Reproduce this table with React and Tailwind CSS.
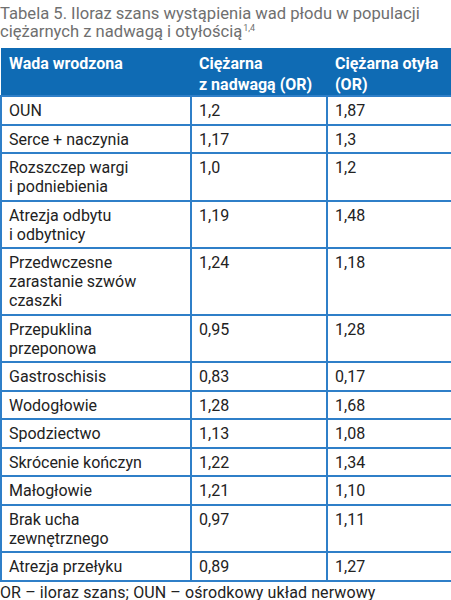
const rows = [
  ['OUN', '1,2', '1,87'],
  ['Serce + naczynia', '1,17', '1,3'],
  ['Rozszczep wargi\ni podniebienia', '1,0', '1,2'],
  ['Atrezja odbytu\ni odbytnicy', '1,19', '1,48'],
  ['Przedwczesne\nzarastanie szwów\nczaszki', '1,24', '1,18'],
  ['Przepuklina\nprzeponowa', '0,95', '1,28'],
  ['Gastroschisis', '0,83', '0,17'],
  ['Wodogłowie', '1,28', '1,68'],
  ['Spodziectwo', '1,13', '1,08'],
  ['Skrócenie kończyn', '1,22', '1,34'],
  ['Małogłowie', '1,21', '1,10'],
  ['Brak ucha\nzewnętrznego', '0,97', '1,11'],
  ['Atrezja przełyku', '0,89', '1,27'],
];

const App = () => {
  return (
    <div className="w-[451px] bg-white font-['Roboto',sans-serif]">
      {/* Tytuł */}
      <p className="text-[16.6px] leading-[18px] text-[#6f6f6f] pt-[5px] pb-[7px]">
        Tabela 5. Iloraz szans wystąpienia wad płodu w populacji ciężarnych z nadwagą i otyłością
        <span className="relative top-[-6px] ml-[1px] text-[9px] leading-none">1,4</span>
      </p>

      <table className="w-[451px] border-collapse table-fixed text-[16px] leading-[19px] text-[#222]">
        <colgroup>
          <col className="w-[190px]" />
          <col className="w-[136px]" />
          <col className="w-[125px]" />
        </colgroup>
        <thead>
          <tr className="bg-[#0f6bb4] text-white">
            <th className="h-[46px] text-left align-top font-bold pl-[8px] pr-[4px] pt-[5px] pb-0 leading-[21px]">Wada wrodzona</th>
            <th className="h-[46px] text-left align-top font-bold pl-[8px] pr-[4px] pt-[5px] pb-0 leading-[21px]">
              Ciężarna<br />z nadwagą (OR)
            </th>
            <th className="h-[46px] text-left align-top font-bold pl-[8px] pr-[4px] pt-[5px] pb-0 leading-[21px]">
              Ciężarna otyła<br />(OR)
            </th>
          </tr>
        </thead>
        <tbody>
          {rows.map((r, i) => (
            <tr key={i}>
              {r.map((c, j) => (
                <td
                  key={j}
                  className="border-2 border-[#2f7fc8] align-top whitespace-pre-line pl-[7px] pr-[4px] pt-[4px] pb-[3.5px]"
                >
                  {c}
                </td>
              ))}
            </tr>
          ))}
        </tbody>
      </table>

      {/* Leyenda */}
      <p className="text-[16px] leading-[19px] text-[#222] pt-[1px] tracking-[0.1px]">
        OR – iloraz szans; OUN – ośrodkowy układ nerwowy
      </p>
    </div>
  );
};

export default App;
